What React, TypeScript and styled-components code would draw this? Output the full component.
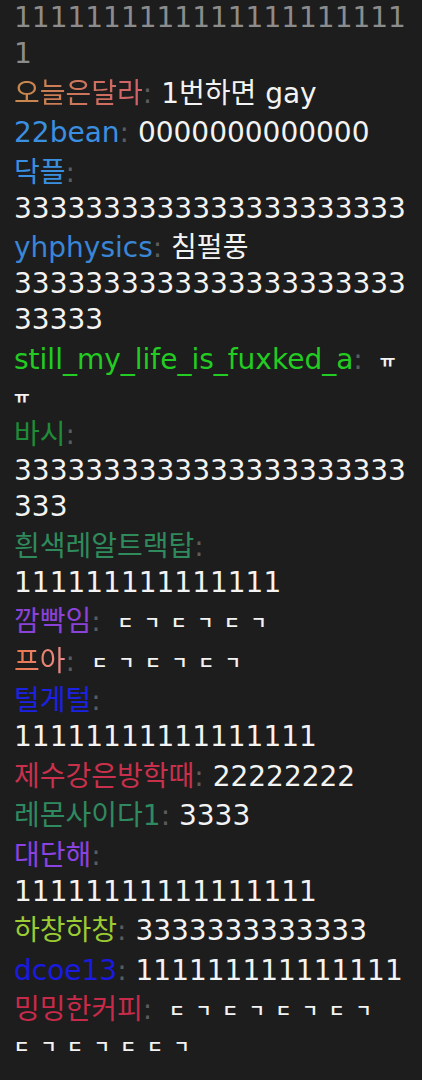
import React from 'react';
import styled, { createGlobalStyle, css } from 'styled-components';

const GlobalStyle = createGlobalStyle`
  body {
    margin: 0;
    padding: 0;
    background: #1d1d1d;
    font-family: "DejaVu Sans", "Noto Sans CJK KR", sans-serif;
  }

  *, *:before, *:after {
    box-sizing: border-box;
  }
`;

const ChatList = styled.div`
  width: 422px;
  min-height: 1080px;
  padding: 0 15px 0 14px;
  display: flex;
  flex-direction: column;
  gap: 3.5px;
  background: #1d1d1d;
  overflow: hidden;
`;

const Message = styled.div<{ $faded?: boolean }>`
  font-size: 28px;
  line-height: 36px;
  color: ${(p) => (p.$faded ? '#8c8c8c' : '#f3f3f3')};
  overflow-wrap: break-word;
  word-break: normal;
`;

const Name = styled.span<{ $color: string; $to?: string }>`
  white-space: nowrap;
  color: ${(p) => p.$color};
  ${(p) =>
    p.$to &&
    css`
      background: linear-gradient(90deg, ${p.$color}, ${p.$to});
      -webkit-background-clip: text;
      background-clip: text;
      color: transparent;
    `}
`;

const Colon = styled.span`
  color: #5c5c5c;
`;

// small bold jamo with a full-width advance, as the chat font draws them
const Jamo = styled.span`
  font-family: "Noto Sans CJK KR", sans-serif;
  font-size: 17px;
  font-weight: 700;
  letter-spacing: 11px;
  margin-left: 8px;
  vertical-align: 2px;
`;

type Chat = {
  name: string;
  color: string;
  to?: string;
  text: string;
  jamo?: boolean;
};

const chats: Chat[] = [
  { name: '오늘은달라', color: '#c98a4c', to: '#d2606a', text: '1번하면 gay' },
  { name: '22bean', color: '#3b8fe0', text: '0000000000000' },
  { name: '닥플', color: '#3b8fe0', text: '3333333333333333333333' },
  { name: 'yhphysics', color: '#3a86d6', text: '침펄풍 333333333333333333333333333' },
  { name: 'still_my_life_is_fuxked_a', color: '#22cc22', text: 'ㅠㅠ', jamo: true },
  { name: '바시', color: '#1f8c38', text: '3333333333333333333333333' },
  { name: '흰색레알트랙탑', color: '#2f8a5c', text: '111111111111111' },
  { name: '깜빡임', color: '#8a42d8', text: 'ㄷㄱㄷㄱㄷㄱ', jamo: true },
  { name: '프아', color: '#e8764a', to: '#e88c8c', text: 'ㄷㄱㄷㄱㄷㄱ', jamo: true },
  { name: '털게털', color: '#1c22e4', text: '11111111111111111' },
  { name: '제수강은방학때', color: '#c8304c', text: '22222222' },
  { name: '레몬사이다1', color: '#2f8a60', text: '3333' },
  { name: '대단해', color: '#8a42e0', text: '11111111111111111' },
  { name: '하창하창', color: '#9ccc34', text: '3333333333333' },
  { name: 'dcoe13', color: '#1a1ae0', text: '111111111111111' },
  { name: '밍밍한커피', color: '#c82a4a', text: 'ㄷㄱㄷㄱㄷㄱㄷㄱㄷㄱㄷㄱㄷㄷㄱ', jamo: true },
];

export default function App() {
  return (
    <>
      <GlobalStyle />
      <ChatList>
        <Message $faded>11111111111111111111111</Message>
        {chats.map((c, i) => (
          <Message key={i}>
            <Name $color={c.color} $to={c.to}>
              {c.name}
            </Name>
            <Colon>: </Colon>
            {c.jamo ? <Jamo>{c.text}</Jamo> : c.text}
          </Message>
        ))}
      </ChatList>
    </>
  );
}
